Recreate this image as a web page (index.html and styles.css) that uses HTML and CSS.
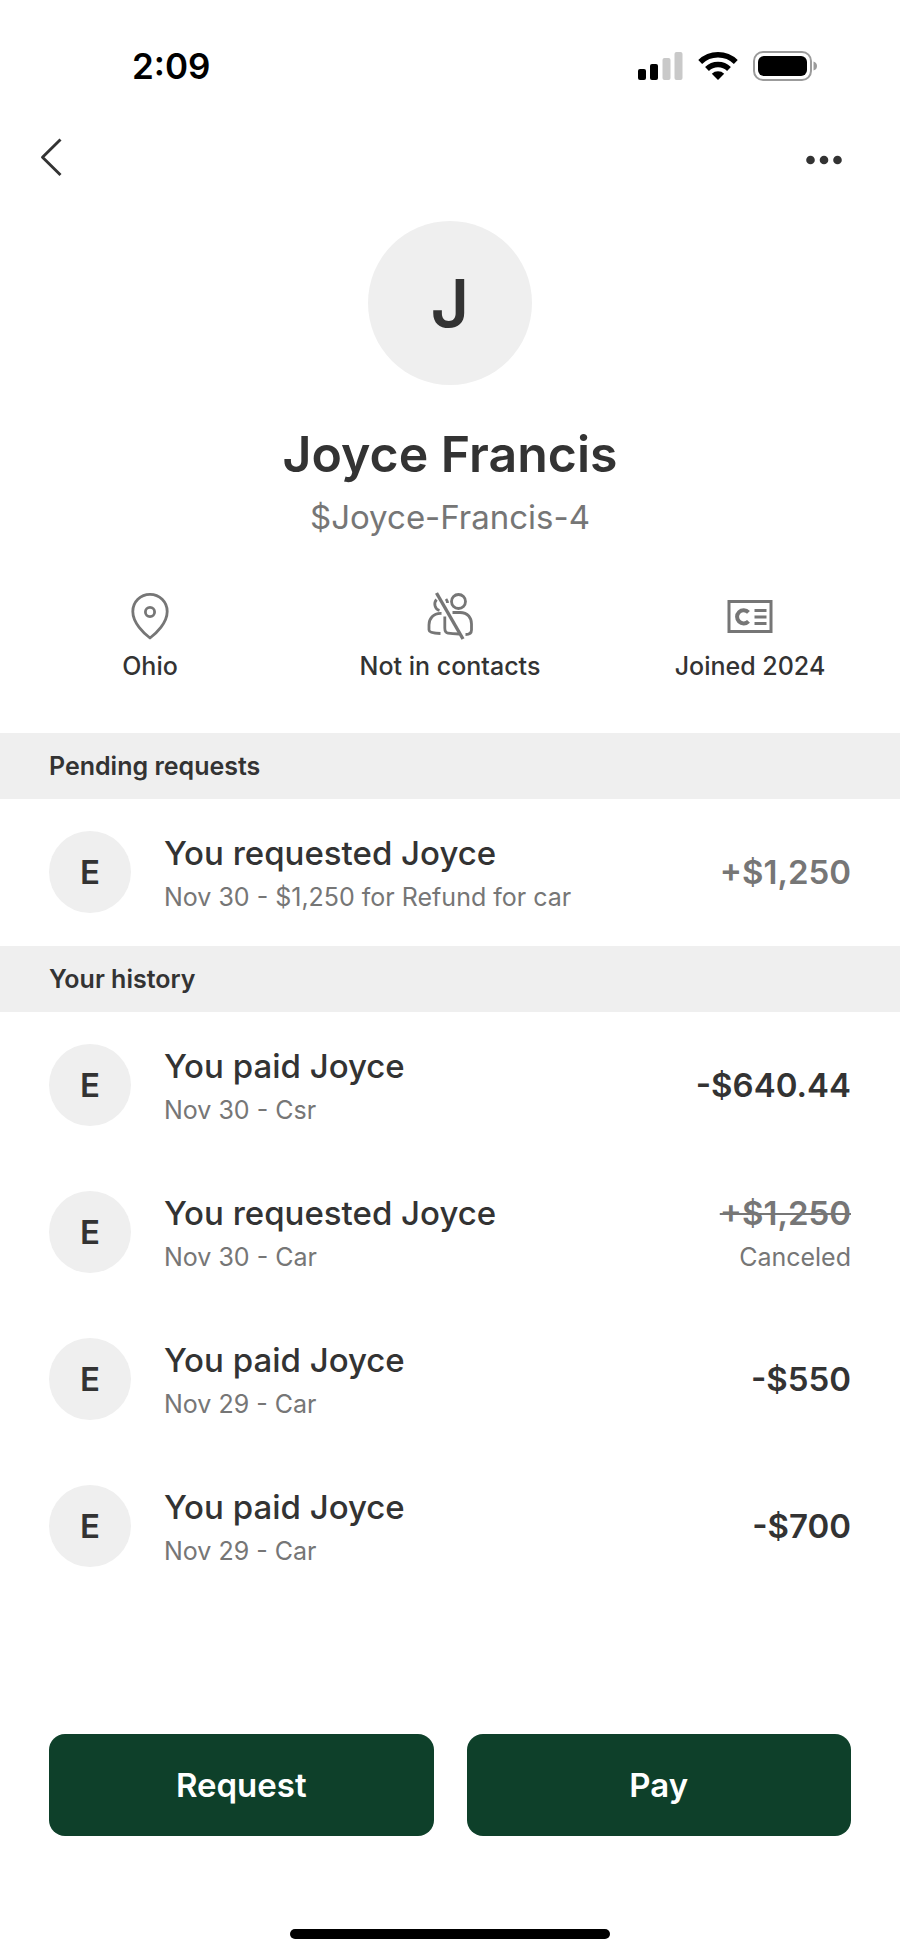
FILE: index.html
```html
<!DOCTYPE html>
<html lang="en">

<head>
    <meta charset="UTF-8">
    <meta name="viewport" content="width=device-width, initial-scale=1">
    <title>Joyce Francis</title>
    <link rel="stylesheet" href="styles.css">
</head>

<body>
    <div class="screen">
        <!-- status bar -->
        <div class="status">
            <time class="status-time">2:09</time>
            <div class="status-icons">
                <svg width="45" height="30" viewBox="0 0 45 30">
                    <rect x="0" y="18" width="8" height="11" rx="2" />
                    <rect x="12" y="13" width="8" height="16" rx="2" />
                    <rect x="24.500" y="7" width="8" height="22" rx="2" fill="#c9c9c9" />
                    <rect x="36.500" y="1" width="8" height="28" rx="2" fill="#c9c9c9" />
                </svg>
                <svg width="40" height="30" viewBox="0 0 40 30">
                    <path d="M20 29 L13.800 22.800 A9 9 0 0 1 26.200 22.800 Z" />
                    <path d="M9 18 A15.800 15.800 0 0 1 31 18" fill="none" stroke="#000" stroke-width="5.500" />
                    <path d="M2.200 11 A25.500 25.500 0 0 1 37.800 11" fill="none" stroke="#000" stroke-width="5.500" />
                </svg>
                <svg width="65" height="30" viewBox="0 0 65 30">
                    <rect x="1" y="1" width="57" height="28" rx="9" fill="none" stroke="#9b9b9b" stroke-width="2" />
                    <rect x="5" y="5" width="49" height="20" rx="6" />
                    <path d="M60.500 10.500 Q64 11.500 64 15 Q64 18.500 60.500 19.500 Z" fill="#9b9b9b" />
                </svg>
            </div>
        </div>

        <nav class="nav">
            <button class="nav-btn" type="button" aria-label="Back">
                <svg width="22" height="44" viewBox="0 0 22 44">
                    <path d="M20.500 1.500 L2.500 19.300 L20.500 37" fill="none" stroke="#333" stroke-width="2.900" stroke-linejoin="round" />
                </svg>
            </button>
            <button class="nav-btn" type="button" aria-label="More">
                <svg width="36" height="10" viewBox="0 0 36 10" fill="#333">
                    <circle cx="4.500" cy="5" r="4.300" />
                    <circle cx="18" cy="5" r="4.300" />
                    <circle cx="31.500" cy="5" r="4.300" />
                </svg>
            </button>
        </nav>

        <header class="profile">
            <div class="avatar avatar-big">J</div>
            <h1 class="name">Joyce Francis</h1>
            <p class="cashtag">$Joyce-Francis-4</p>
        </header>

        <ul class="facts">
            <li class="fact">
                <svg width="48" height="48" viewBox="0 0 48 48" fill="none" stroke="#767676" stroke-width="2.800">
                    <path d="M24 46 C18 41.500 6.800 31 6.800 19.500 A17.200 17.200 0 0 1 41.200 19.500 C41.200 31 30 41.500 24 46 Z" stroke-linejoin="round" />
                    <circle cx="24" cy="20" r="4.600" />
                </svg>
                <span>Ohio</span>
            </li>
            <li class="fact">
                <svg width="48" height="48" viewBox="0 0 48 48" fill="none" stroke="#767676" stroke-width="2.800">
                    <circle cx="32.500" cy="9.500" r="7" />
                    <path d="M10.500 7.500 C7.500 11 8.500 17 13.500 18.500 M20 7 Q21.500 9 21.500 11 M15.500 21.500 C7 21 3 27 3 33 V38 Q3 41 14.500 41.500 M18.800 24.500 V36 Q18.800 40.500 22 41.200 Q26 42 33 42 M26.500 20.500 H34 C42 20.500 45.500 26 45.500 32 V38 Q45.500 42.500 39.500 42.500" />
                    <path d="M10.500 1 L37 47" stroke-width="3.400" />
                </svg>
                <span>Not in contacts</span>
            </li>
            <li class="fact">
                <svg width="48" height="48" viewBox="0 0 48 48" fill="none" stroke="#767676" stroke-width="3">
                    <rect x="3" y="9.500" width="42" height="30" />
                    <path d="M22.500 20.300 A6.600 6.600 0 1 0 22.500 29.300" stroke-width="4" />
                    <path d="M28.500 18.500 H40.500 M28.500 25 H40.500 M28.500 31.500 H40.500" stroke-width="2.800" />
                </svg>
                <span>Joined 2024</span>
            </li>
        </ul>

        <!-- pending -->
        <section>
            <h2 class="section-title">Pending requests</h2>
            <ul class="list">
                <li class="row">
                    <div class="avatar">E</div>
                    <div class="info">
                        <p class="title">You requested Joyce</p>
                        <p class="note">Nov 30 - $1,250 for Refund for car</p>
                    </div>
                    <div class="sum">
                        <p class="amount muted">+$1,250</p>
                    </div>
                </li>
            </ul>
        </section>

        <!-- history -->
        <section>
            <h2 class="section-title">Your history</h2>
            <ul class="list">
                <li class="row">
                    <div class="avatar">E</div>
                    <div class="info">
                        <p class="title">You paid Joyce</p>
                        <p class="note">Nov 30 - Csr</p>
                    </div>
                    <div class="sum">
                        <p class="amount">-$640.44</p>
                    </div>
                </li>
                <li class="row">
                    <div class="avatar">E</div>
                    <div class="info">
                        <p class="title">You requested Joyce</p>
                        <p class="note">Nov 30 - Car</p>
                    </div>
                    <div class="sum">
                        <p class="amount muted"><s>+$1,250</s></p>
                        <p class="note">Canceled</p>
                    </div>
                </li>
                <li class="row">
                    <div class="avatar">E</div>
                    <div class="info">
                        <p class="title">You paid Joyce</p>
                        <p class="note">Nov 29 - Car</p>
                    </div>
                    <div class="sum">
                        <p class="amount">-$550</p>
                    </div>
                </li>
                <li class="row">
                    <div class="avatar">E</div>
                    <div class="info">
                        <p class="title">You paid Joyce</p>
                        <p class="note">Nov 29 - Car</p>
                    </div>
                    <div class="sum">
                        <p class="amount">-$700</p>
                    </div>
                </li>
            </ul>
        </section>

        <footer class="footer">
            <div class="actions">
                <button class="action" type="button">Request</button>
                <button class="action" type="button">Pay</button>
            </div>
            <div class="home-bar"></div>
        </footer>
    </div>
</body>

</html>
```
FILE: styles.css
```css
* {
    margin: 0;
    padding: 0;
    box-sizing: border-box;
}

body {
    background: #fff;
    color: #333;
    font-family: Inter, "Liberation Sans", sans-serif;
}

ul {
    list-style: none;
}

button {
    border: none;
    background: none;
    font-family: inherit;
    cursor: pointer;
}

svg {
    display: block;
}

.screen {
    min-height: 100vh;
    display: flex;
    flex-direction: column;
}

/* status bar */

.status {
    display: flex;
    justify-content: space-between;
    align-items: center;
    padding: 44px 82px 0 132px;
    color: #000;
}

.status-time {
    font-size: 35px;
    line-height: 44px;
    font-weight: 600;
}

.status-icons {
    display: flex;
    gap: 15px;
}

.nav {
    display: flex;
    justify-content: space-between;
    align-items: center;
    padding: 50px 58px 0 40px;
}

.nav-btn {
    display: flex;
    align-items: center;
    height: 44px;
}

/* profile */

.profile {
    display: flex;
    flex-direction: column;
    align-items: center;
    padding-top: 39px;
}

.avatar {
    display: flex;
    align-items: center;
    justify-content: center;
    flex: none;
    width: 82px;
    height: 82px;
    border-radius: 50%;
    background: #efefef;
    font-size: 33px;
    font-weight: 600;
}

.avatar-big {
    width: 164px;
    height: 164px;
    font-size: 66px;
}

.name {
    margin-top: 37px;
    font-size: 50px;
    line-height: 64px;
    font-weight: 600;
}

.cashtag {
    margin-top: 9px;
    font-size: 33px;
    line-height: 44px;
    color: #767676;
}

.facts {
    display: grid;
    grid-template-columns: repeat(3, 1fr);
    padding: 53px 0 51px;
}

.fact {
    display: flex;
    flex-direction: column;
    align-items: center;
    gap: 10px;
    font-size: 25px;
    line-height: 32px;
    font-weight: 500;
}

/* lists */

.section-title {
    padding: 16px 49px;
    background: #efefef;
    font-size: 25px;
    line-height: 34px;
    font-weight: 600;
}

.row {
    display: flex;
    align-items: center;
    padding: 29px 49px 30px;
}

.info {
    flex: 1;
    margin-left: 33px;
}

.title {
    font-size: 33px;
    line-height: 50px;
    font-weight: 500;
}

.note {
    font-size: 25px;
    line-height: 38px;
    color: #767676;
}

.sum {
    text-align: right;
}

.amount {
    font-size: 33px;
    line-height: 50px;
    font-weight: 600;
}

.muted {
    color: #767676;
}

.muted s {
    text-decoration-thickness: 2px;
}

/* bottom */

.footer {
    margin-top: auto;
    padding: 48px 49px 16px;
}

.actions {
    display: grid;
    grid-template-columns: 1fr 1fr;
    gap: 33px;
}

.action {
    height: 102px;
    border-radius: 16px;
    background: #0e402a;
    color: #fff;
    font-size: 33px;
    font-weight: 600;
}

.home-bar {
    width: 40%;
    height: 10px;
    margin: 93px auto 0;
    border-radius: 5px;
    background: #000;
}
```
